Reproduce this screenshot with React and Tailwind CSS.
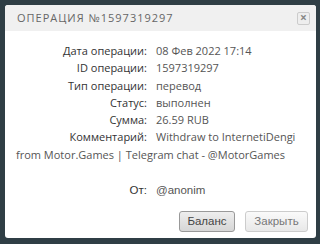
import React from 'react';

const rows = [
  ['Дата операции:', '08 Фев 2022 17:14'],
  ['ID операции:', '1597319297'],
  ['Тип операции:', 'перевод'],
  ['Статус:', 'выполнен'],
  ['Сумма:', '26.59 RUB'],
  ['Комментарий:', 'Withdraw to InternetiDengi'],
];

const App = () => {
  return (
    <div className="w-[320px] h-[244px] bg-[#2f3e45] pt-[5px] pl-[5px] overflow-hidden">
      <div className="w-[311px] h-[233px] bg-white rounded-[3px] flex flex-col overflow-hidden">
        <div className="h-[26px] bg-[#f0f0f0] flex items-center justify-between pl-[12px] pr-[6px]">
          <span
            className="text-[11px] tracking-[1px] text-[#666] uppercase"
            style={{ fontFamily: '"Open Sans", sans-serif' }}
          >
            Операция №1597319297
          </span>
          <button className="w-[13px] h-[13px] border border-[#ccc] rounded-[2px] bg-[#eee] flex items-center justify-center text-[#888] text-[12px] font-bold leading-none">
            ×
          </button>
        </div>

        <div
          className="pl-[11px] pr-[8px] pt-[11px] text-[11px] leading-[17.3px] text-[#555]"
          style={{ fontFamily: '"Open Sans", sans-serif' }}
        >
          {rows.map(([label, value]) => (
            <div key={label}>
              <span className="inline-block w-[131px] text-right text-[#333] mr-[9px]">{label}</span>
              <span>{value}</span>
            </div>
          ))}
          <div>from Motor.Games | Telegram chat - @MotorGames</div>
        </div>

        <div
          className="pl-[11px] mt-[19px] text-[11.5px] leading-[17px] text-[#555]"
          style={{ fontFamily: '"Liberation Sans", Arial, sans-serif' }}
        >
          <span className="inline-block w-[131px] text-right text-[#333] mr-[9px]">От:</span>
          <span>@anonim</span>
        </div>

        <div
          className="flex justify-end gap-[10px] pr-[8px] mt-auto mb-[6px] text-[11.5px]"
          style={{ fontFamily: '"Liberation Sans", Arial, sans-serif' }}
        >
          <button className="w-[56px] h-[21px] rounded-[3px] border border-[#999] bg-gradient-to-b from-[#eeeeee] to-[#d6d6d6] text-[#444]">
            Баланс
          </button>
          <button className="w-[63px] h-[21px] rounded-[3px] border border-[#ccc] bg-gradient-to-b from-[#fafafa] to-[#e8e8e8] text-[#777]">
            Закрыть
          </button>
        </div>
      </div>
    </div>
  );
};

export default App;
